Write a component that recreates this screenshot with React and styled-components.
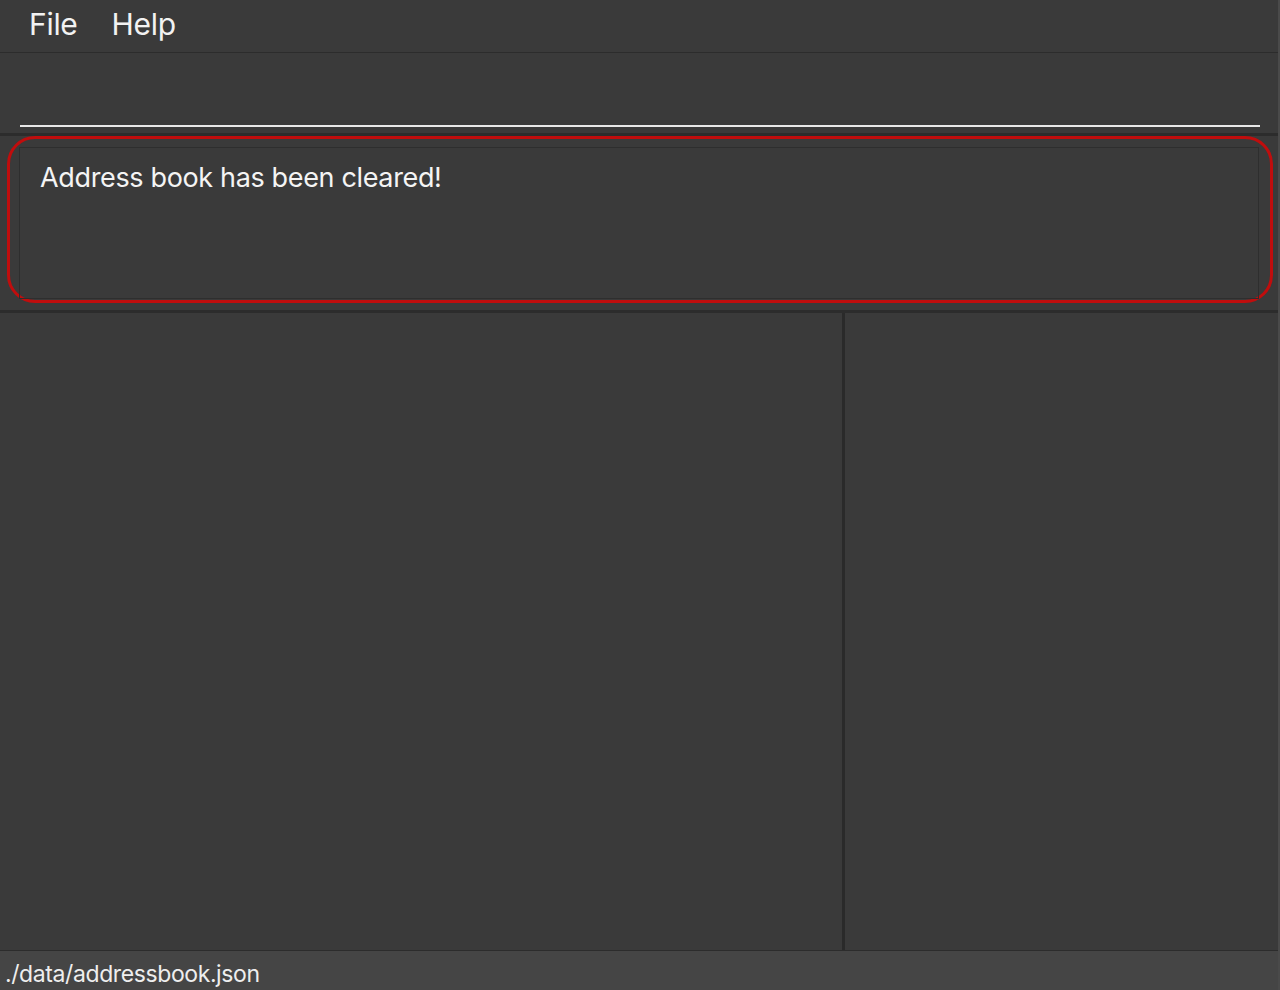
import React from 'react';
import styled, { createGlobalStyle } from 'styled-components';

const Global = createGlobalStyle`
  html, body { margin: 0; padding: 0; background: #3a3a3a; }
  body { font-family: Inter, "Open Sans", "Liberation Sans", sans-serif; }
  * { box-sizing: border-box; }
`;

const Window = styled.div`
  width: 1280px;
  height: 990px;
  display: flex;
  flex-direction: column;
  background: #3a3a3a;
  border-right: 2px solid #4a4a4a;
  overflow: hidden;
`;

const MenuBar = styled.div`
  height: 53px;
  display: flex;
  align-items: center;
  gap: 34px;
  padding: 0 0 4px 29px;
  border-bottom: 1px solid #2c2c2c;
  flex-shrink: 0;
`;

const MenuItem = styled.span`
  color: #f2f2f2;
  font-size: 30px;
  letter-spacing: -0.3px;
`;

const CommandArea = styled.div`
  height: 83px;
  padding: 0 18px 6px 20px;
  display: flex;
  align-items: flex-end;
  border-bottom: 3px solid #2c2c2c;
  flex-shrink: 0;
`;

const CommandInput = styled.div`
  width: 100%;
  height: 2px;
  background: #e8e8e8;
`;

const ResultArea = styled.div`
  height: 177px;
  padding: 0 5px 7px 7px;
  border-bottom: 3px solid #2c2c2c;
  flex-shrink: 0;
`;

const Highlight = styled.div`
  height: 100%;
  border: 3px solid #c00d0d;
  border-radius: 28px;
  padding: 8px 11px 1px 9px;
`;

const ResultBox = styled.div`
  height: 100%;
  border: 1px solid #2e2e2e;
  padding: 13px 20px;
  color: #f4f4f4;
  font-size: 27px;
  letter-spacing: -0.35px;
`;

const Lists = styled.div`
  flex: 1;
  display: flex;
  min-height: 0;
`;

const Pane = styled.div`
  width: ${p => p.$w};
  flex-shrink: 0;
  background: #3a3a3a;
`;

const Divider = styled.div`
  width: 3px;
  background: #2a2a2a;
`;

const StatusBar = styled.div`
  height: 40px;
  background: #454545;
  border-top: 1px solid #2c2c2c;
  padding: 9px 0 0 5px;
  color: #eeeeee;
  font-size: 23px;
  letter-spacing: -0.4px;
  flex-shrink: 0;
`;

export default function App() {
  return (
    <>
      <Global />
      <Window>
        <MenuBar>
          <MenuItem>File</MenuItem>
          <MenuItem>Help</MenuItem>
        </MenuBar>
        <CommandArea>
          <CommandInput />
        </CommandArea>
        <ResultArea>
          <Highlight>
            <ResultBox>Address book has been cleared!</ResultBox>
          </Highlight>
        </ResultArea>
        <Lists>
          <Pane $w="842px" />
          <Divider />
          <Pane $w="433px" />
        </Lists>
        <StatusBar>./data/addressbook.json</StatusBar>
      </Window>
    </>
  );
}
